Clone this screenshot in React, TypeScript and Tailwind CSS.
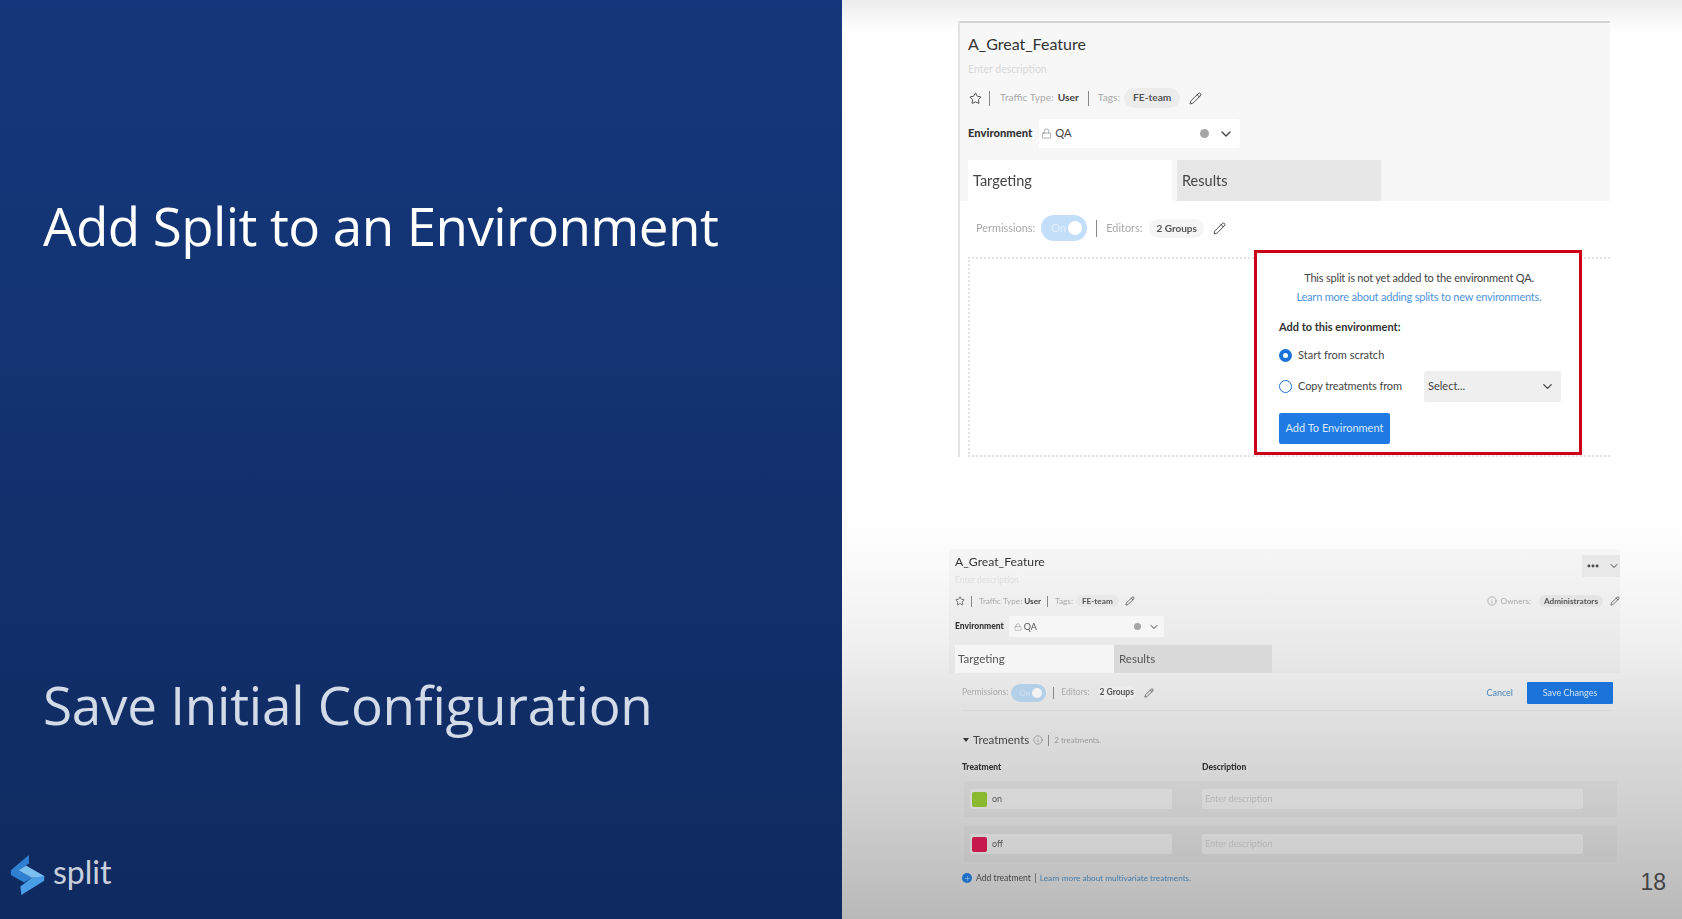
import { ChevronDown, Ellipsis, Info, Lock, Pencil, Plus, Star } from "lucide-react";

const lato = "font-['Lato','Open_Sans',sans-serif]";

function SplitMark() {
  return (
    <svg width="35" height="40" viewBox="0 0 35 42" className="shrink-0">
      <path d="M19 0 L0 16 L0 21 L14 29 L22 24 L8 16 L19 9 Z" fill="#2f80d2" />
      <path d="M8 16 L16 11 L35 22 L35 24 L22 24 Z" fill="#7cc0f0" />
      <path d="M35 22 L35 27 L11 42 L10 33 L22 24 Z" fill="#4a9ee6" />
    </svg>
  );
}

function Toggle({ big }: { big?: boolean }) {
  return (
    <span
      className={
        big
          ? "flex h-[26px] w-[46px] items-center justify-between rounded-full bg-[#c3def8] pl-[10px] pr-[5px] text-[11px] text-[#e0eefb]"
          : "flex h-[18px] w-[35px] items-center justify-between rounded-full bg-[#b4cfe8] pl-[8px] pr-[4px] text-[8px] text-[#cfe0ef]"
      }
    >
      On
      <span className={big ? "size-[14px] rounded-full bg-white" : "size-[10px] rounded-full bg-[#f2f2f2]"} />
    </span>
  );
}

function TopCard() {
  return (
    <section className={`ml-[116px] mt-[21px] w-[652px] border-l-2 border-[#e2e2e2] blur-[0.5px] ${lato}`}>
      <div className="h-[180px] border-t-2 border-[#d4d4d4] bg-[#f7f7f7] pl-[8px]">
        <h2 className="pt-[9px] text-[16px] leading-[24px] text-[#333]">A_Great_Feature</h2>
        <p className="mt-[5px] text-[10.5px] leading-[16px] text-[#d8d8d8]">Enter description</p>
        <div className="mt-[11px] flex h-[20px] items-center text-[10.2px]">
          <Star size={13} strokeWidth={1.6} className="ml-[1px] text-[#333]" />
          <span className="ml-[7px] h-[15px] w-px bg-[#888]" />
          <span className="ml-[10px] text-[#aaa]">Traffic Type:</span>
          <span className="ml-[4px] font-bold text-[#444]">User</span>
          <span className="ml-[9px] h-[15px] w-px bg-[#888]" />
          <span className="ml-[9px] text-[#aaa]">Tags:</span>
          <span className="ml-[4px] rounded-full bg-[#ececec] px-[9px] py-[2px] font-bold text-[#555]">FE-team</span>
          <Pencil size={13} strokeWidth={1.6} className="ml-[9px] text-[#333]" />
        </div>
        <div className="mt-[11px] flex h-[29px] items-center text-[11.2px]">
          <span className="font-black text-[#333]">Environment</span>
          <div className="ml-[7px] flex h-[29px] w-[201px] items-center rounded-[3px] bg-white pl-[2px] pr-[6px]">
            <Lock size={11} strokeWidth={1.3} className="text-[#777]" />
            <span className="ml-[3px] text-[#444]">QA</span>
            <span className="ml-auto size-[9px] rounded-full bg-[#a5a5a5]" />
            <ChevronDown size={16} strokeWidth={2} className="ml-[9px] text-[#444]" />
          </div>
        </div>
        <div className="mt-[12px] flex h-[41px] items-stretch text-[14.5px] text-[#444]">
          <div className="flex w-[204px] items-center bg-white pl-[5px]">Targeting</div>
          <div className="ml-[5px] flex w-[204px] items-center bg-[#e7e7e7] pl-[5px]">Results</div>
        </div>
      </div>
      <div className="flex h-[56px] items-center pb-[2px] pl-[16px] text-[10.9px]">
        <span className="text-[#aaa]">Permissions:</span>
        <span className="ml-[6px]"><Toggle big /></span>
        <span className="ml-[9px] h-[17px] w-px bg-[#888]" />
        <span className="ml-[9px] text-[#aaa]">Editors:</span>
        <span className="ml-[7px] rounded-full bg-[#f5f5f5] px-[7px] py-[2px] text-[10px] font-bold text-[#555]">2 Groups</span>
        <Pencil size={13} strokeWidth={1.6} className="ml-[9px] text-[#333]" />
      </div>
      <div className="ml-[8px] flex h-[200px] justify-end border-y-2 border-l-2 border-dotted border-[#e2e2e2] pr-[28px]">
        <div className="-mt-[9px] h-[205px] w-[328px] border-[3px] border-[#cc0018] bg-white pl-[22px] pr-[20px] pt-[15px]">
          <p className="text-center text-[11px] leading-[19px] tracking-[-0.2px] text-[#444]">This split is not yet added to the environment QA.</p>
          <p className="text-center text-[11px] leading-[19px] tracking-[-0.2px] text-[#4f94dc]">Learn more about adding splits to new environments.</p>
          <p className="mt-[12px] text-[11px] leading-[18px] font-bold text-[#333]">Add to this environment:</p>
          <div className="mt-[9px] flex h-[20px] items-center text-[11px] text-[#444]">
            <span className="flex size-[13px] items-center justify-center rounded-full bg-[#1a73d8]">
              <span className="size-[5px] rounded-full bg-white" />
            </span>
            <span className="ml-[6px]">Start from scratch</span>
          </div>
          <div className="mt-[6px] flex h-[31px] items-center text-[11px] text-[#444]">
            <span className="size-[13px] shrink-0 rounded-full border-[1.5px] border-[#1a73d8]" />
            <span className="ml-[6px] w-[126px] shrink-0 tracking-[-0.1px]">Copy treatments from</span>
            <div className="flex h-[31px] w-[137px] shrink-0 items-center justify-between rounded-[2px] bg-[#efefef] pl-[4px] pr-[6px]">
              Select...
              <ChevronDown size={15} strokeWidth={2} className="text-[#444]" />
            </div>
          </div>
          <button className="mt-[11px] h-[31px] w-[111px] rounded-[2px] bg-[#1f7be3] text-[11px] text-[#d7e8fb]">Add To Environment</button>
        </div>
      </div>
    </section>
  );
}

function TreatmentRow({ name, swatch }: { name: string; swatch: string }) {
  return (
    <div className="ml-[15px] flex h-[36px] w-[653px] items-center bg-black/[0.025] pl-[6px]">
      <div className="flex h-[20px] w-[202px] items-center rounded-[2px] bg-white/20 pl-[2px] text-[9px] text-[#555]">
        <span className={`size-[15px] rounded-[2px] ${swatch}`} />
        <span className="ml-[5px]">{name}</span>
      </div>
      <div className="ml-[30px] flex h-[20px] w-[381px] items-center rounded-[2px] bg-white/20 pl-[3px] text-[9px] text-[#b5b5b5]">Enter description</div>
    </div>
  );
}

function BottomCard() {
  return (
    <section className={`ml-[107px] mt-[92px] w-[671px] blur-[0.7px] ${lato}`}>
      <div className="h-[124px] bg-black/[0.025] pl-[6px]">
        <div className="flex h-[28px] items-start justify-between">
          <h2 className="pt-[4px] text-[12.2px] leading-[18px] text-[#333]">A_Great_Feature</h2>
          <div className="mt-[6px] flex h-[22px] w-[38px] items-center justify-between bg-[#e8e8e8] pl-[4px] text-[#444]">
            <Ellipsis size={14} strokeWidth={3} />
            <ChevronDown size={12} strokeWidth={2} />
          </div>
        </div>
        <p className="-mt-[3px] text-[8.5px] leading-[13px] text-[#dcdcdc]">Enter description</p>
        <div className="mt-[7px] flex h-[14px] items-center text-[8.2px]">
          <Star size={10} strokeWidth={1.6} className="text-[#333]" />
          <span className="ml-[6px] h-[11px] w-px bg-[#888]" />
          <span className="ml-[7px] text-[#aaa]">Traffic Type:</span>
          <span className="ml-[2px] font-bold text-[#444]">User</span>
          <span className="ml-[6px] h-[11px] w-px bg-[#888]" />
          <span className="ml-[7px] text-[#aaa]">Tags:</span>
          <span className="ml-[3px] rounded-full bg-[#e8e8e8] px-[6px] font-bold text-[#555]">FE-team</span>
          <Pencil size={10} strokeWidth={1.6} className="ml-[6px] text-[#333]" />
          <Info size={10} strokeWidth={1.4} className="ml-auto text-[#888]" />
          <span className="ml-[4px] text-[#aaa]">Owners:</span>
          <span className="ml-[8px] rounded-full bg-[#e4e4e4] px-[5px] font-bold text-[#555]">Administrators</span>
          <Pencil size={10} strokeWidth={1.6} className="ml-[7px] text-[#333]" />
        </div>
        <div className="mt-[8px] flex h-[21px] items-center text-[8.5px]">
          <span className="font-black text-[#333]">Environment</span>
          <div className="ml-[5px] flex h-[21px] w-[155px] items-center bg-[#f6f6f6] pl-[5px] pr-[4px] text-[9px] text-[#555]">
            <Lock size={8} strokeWidth={1.4} className="text-[#888]" />
            <span className="ml-[2px]">QA</span>
            <span className="ml-auto size-[7px] rounded-full bg-[#a5a5a5]" />
            <ChevronDown size={12} strokeWidth={2} className="ml-[7px] text-[#444]" />
          </div>
        </div>
        <div className="mt-[8px] flex h-[28px] items-stretch text-[11.5px] text-[#555]">
          <div className="flex w-[159px] items-center bg-[#f5f5f5] pl-[3px]">Targeting</div>
          <div className="flex w-[158px] items-center bg-[#d9d9d9] pl-[5px]">Results</div>
        </div>
      </div>
      <div className="ml-[13px] mr-[7px] flex h-[38px] items-center border-b border-[#d8d8d8] pt-[2px] text-[8.5px]">
        <span className="text-[#aaa]">Permissions:</span>
        <span className="ml-[3px]"><Toggle /></span>
        <span className="ml-[7px] h-[12px] w-px bg-[#888]" />
        <span className="ml-[7px] text-[#aaa]">Editors:</span>
        <span className="ml-[8px] rounded-full bg-[#ececec] px-[2px] font-bold text-[#555]">2 Groups</span>
        <Pencil size={10} strokeWidth={1.6} className="ml-[8px] text-[#333]" />
        <span className="ml-auto text-[9px] text-[#4a86c0]">Cancel</span>
        <button className="ml-[14px] h-[22px] w-[86px] rounded-[1px] bg-[#1a73d8] text-[9px] text-[#cfe2f7]">Save Changes</button>
      </div>
      <div className="ml-[14px] mt-[20px] flex h-[18px] items-center">
        <span className="size-0 border-x-[3px] border-t-[4px] border-x-transparent border-t-[#333]" />
        <span className="ml-[4px] text-[11.5px] text-[#444]">Treatments</span>
        <Info size={10} strokeWidth={1.4} className="ml-[4px] text-[#777]" />
        <span className="ml-[5px] h-[11px] w-px bg-[#888]" />
        <span className="ml-[5px] text-[8px] text-[#999]">2 treatments.</span>
      </div>
      <div className="ml-[13px] mt-[11px] flex h-[14px] items-center text-[8.5px] font-black text-[#333]">
        <span className="w-[240px]">Treatment</span>
        <span>Description</span>
      </div>
      <div className="mt-[7px] flex flex-col gap-[9px]">
        <TreatmentRow name="on" swatch="bg-[#8ab82e]" />
        <TreatmentRow name="off" swatch="bg-[#c8194f]" />
      </div>
      <div className="ml-[13px] mt-[9px] flex h-[14px] items-center text-[8.6px]">
        <span className="flex size-[10px] items-center justify-center rounded-full bg-[#1f6fc4] text-[#9cc3ea]">
          <Plus size={7} strokeWidth={2} />
        </span>
        <span className="ml-[4px] text-[#444]">Add treatment</span>
        <span className="ml-[4px] h-[10px] w-px bg-[#777]" />
        <span className="ml-[4px] text-[8.2px] text-[#467ca8]">Learn more about multivariate treatments.</span>
      </div>
    </section>
  );
}

export default function App() {
  return (
    <div className="flex h-[919px] w-[1682px] overflow-hidden">
      <aside className="flex w-[842px] shrink-0 flex-col bg-gradient-to-b from-[#15387c] to-[#0f2a60] pl-[43px] font-['Open_Sans',sans-serif]">
        <h1 className="mt-[187px] text-[53px] leading-[78px] tracking-[-0.6px] text-white">Add Split to an Environment</h1>
        <h1 className="mt-[403px] text-[53px] leading-[74px] tracking-[-0.25px] text-[#d3dbe8]">Save Initial Configuration</h1>
        <div className="-ml-[33px] mt-[110px] flex items-center">
          <SplitMark />
          <span className="ml-[8px] pb-[6px] font-['Lato',sans-serif] text-[32px] leading-[40px] text-[#c9d0dc]">split</span>
        </div>
      </aside>
      <main className="relative flex-1 bg-[linear-gradient(to_bottom,#ececec_0px,#ffffff_32px,#ffffff_520px,#efefef_650px,#dedede_725px,#cfcfcf_810px,#b9b9b9_919px)]">
        <TopCard />
        <BottomCard />
        <span className="absolute bottom-[24px] right-[16px] font-['Liberation_Sans',sans-serif] text-[23px] leading-[26px] text-[#444]">18</span>
      </main>
    </div>
  );
}
